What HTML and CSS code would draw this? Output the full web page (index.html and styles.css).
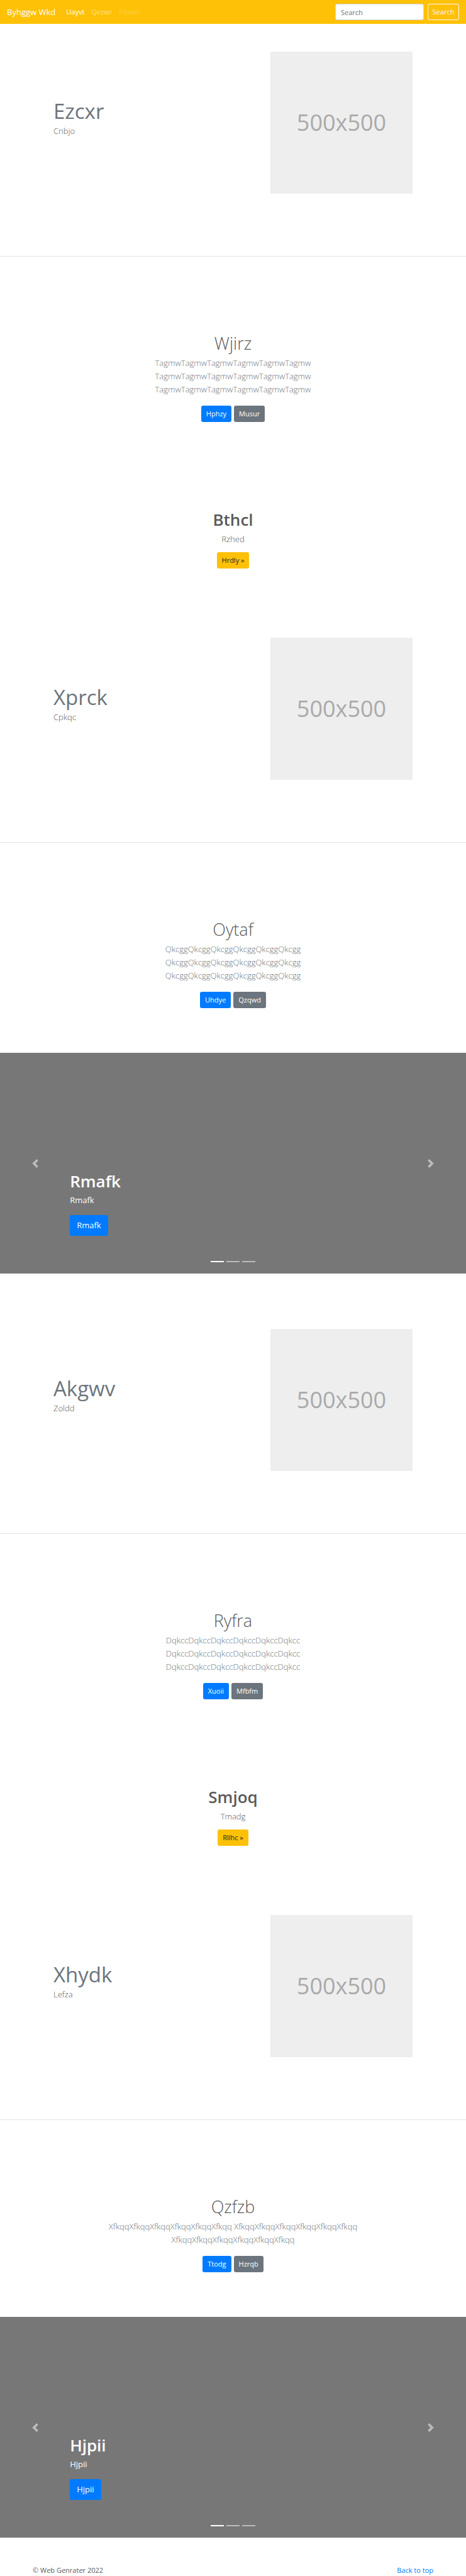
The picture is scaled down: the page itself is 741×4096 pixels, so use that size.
FILE: index.html
```html
<!DOCTYPE html>
<html lang="en">
<head>
<meta charset="utf-8">
<meta name="viewport" content="width=device-width, initial-scale=1">
<title>Byhggw Wkd</title>
<link rel="stylesheet" href="styles.css">
</head>
<body id="top">
<header class="navbar">
  <a class="brand" href="#">Byhggw Wkd</a>
  <nav class="nav-links">
    <a class="nav-link active" href="#">Uayvt</a>
    <a class="nav-link" href="#">Qezwr</a>
    <a class="nav-link disabled" href="#">Pdawc</a>
  </nav>
  <form class="search">
    <input class="search-input" type="text" placeholder="Search" aria-label="Search">
    <button class="search-button" type="button">Search</button>
  </form>
</header>
<main>
  <section class="feature">
    <div class="feature-text"><h2 class="feature-title">Ezcxr</h2><p class="lead">Cnbjo</p></div>
    <div class="placeholder">500x500</div>
  </section>
  <section class="intro">
    <h1 class="intro-title">Wjirz</h1>
    <p class="lead muted">TagmwTagmwTagmwTagmwTagmwTagmw<br>TagmwTagmwTagmwTagmwTagmwTagmw<br>TagmwTagmwTagmwTagmwTagmwTagmw</p>
    <div class="actions"><a class="btn primary" href="#">Hphzy</a><a class="btn secondary" href="#">Musur</a></div>
  </section>
  <section class="callout">
    <h2 class="callout-title">Bthcl</h2>
    <p class="lead">Rzhed</p>
    <a class="btn warning" href="#">Hrdly »</a>
  </section>
  <section class="feature">
    <div class="feature-text"><h2 class="feature-title">Xprck</h2><p class="lead">Cpkqc</p></div>
    <div class="placeholder">500x500</div>
  </section>
  <section class="intro">
    <h1 class="intro-title">Oytaf</h1>
    <p class="lead muted">QkcggQkcggQkcggQkcggQkcggQkcgg<br>QkcggQkcggQkcggQkcggQkcggQkcgg<br>QkcggQkcggQkcggQkcggQkcggQkcgg</p>
    <div class="actions"><a class="btn primary" href="#">Uhdye</a><a class="btn secondary" href="#">Qzqwd</a></div>
  </section>
  <section class="carousel">
    <h1 class="slide-title">Rmafk</h1>
    <p class="slide-text">Rmafk</p>
    <a class="btn primary large" href="#">Rmafk</a>
    <button class="arrow prev" type="button" aria-label="Previous"><svg class="chevron" viewBox="0 0 8 8"><path d="M5.25 0l-4 4 4 4 1.5-1.5L4.25 4l2.500-2.500L5.250 0z"/></svg></button>
    <button class="arrow next" type="button" aria-label="Next"><svg class="chevron" viewBox="0 0 8 8"><path d="M2.750 0l-1.500 1.500L3.750 4l-2.500 2.500L2.750 8l4-4-4-4z"/></svg></button>
    <div class="indicators"><span class="indicator current"></span><span class="indicator"></span><span class="indicator"></span></div>
  </section>
  <section class="feature">
    <div class="feature-text"><h2 class="feature-title">Akgwv</h2><p class="lead">Zoldd</p></div>
    <div class="placeholder">500x500</div>
  </section>
  <section class="intro">
    <h1 class="intro-title">Ryfra</h1>
    <p class="lead muted">DqkccDqkccDqkccDqkccDqkccDqkcc<br>DqkccDqkccDqkccDqkccDqkccDqkcc<br>DqkccDqkccDqkccDqkccDqkccDqkcc</p>
    <div class="actions"><a class="btn primary" href="#">Xuoii</a><a class="btn secondary" href="#">Mfbfm</a></div>
  </section>
  <section class="callout">
    <h2 class="callout-title">Smjoq</h2>
    <p class="lead">Tmadg</p>
    <a class="btn warning" href="#">Rllhc »</a>
  </section>
  <section class="feature">
    <div class="feature-text"><h2 class="feature-title">Xhydk</h2><p class="lead">Lefza</p></div>
    <div class="placeholder">500x500</div>
  </section>
  <section class="intro">
    <h1 class="intro-title">Qzfzb</h1>
    <p class="lead muted">XfkqqXfkqqXfkqqXfkqqXfkqqXfkqq XfkqqXfkqqXfkqqXfkqqXfkqqXfkqq<br>XfkqqXfkqqXfkqqXfkqqXfkqqXfkqq</p>
    <div class="actions"><a class="btn primary" href="#">Ttodg</a><a class="btn secondary" href="#">Hzrqb</a></div>
  </section>
  <section class="carousel">
    <h1 class="slide-title">Hjpii</h1>
    <p class="slide-text">Hjpii</p>
    <a class="btn primary large" href="#">Hjpii</a>
    <button class="arrow prev" type="button" aria-label="Previous"><svg class="chevron" viewBox="0 0 8 8"><path d="M5.25 0l-4 4 4 4 1.5-1.5L4.25 4l2.500-2.500L5.250 0z"/></svg></button>
    <button class="arrow next" type="button" aria-label="Next"><svg class="chevron" viewBox="0 0 8 8"><path d="M2.750 0l-1.500 1.500L3.750 4l-2.500 2.500L2.750 8l4-4-4-4z"/></svg></button>
    <div class="indicators"><span class="indicator current"></span><span class="indicator"></span><span class="indicator"></span></div>
  </section>
</main>
<footer class="footer">
  <span>© Web Genrater 2022</span>
  <a class="top-link" href="#top">Back to top</a>
</footer>
</body>
</html>
```

FILE: styles.css
```css
* {
  box-sizing: border-box;
}

body {
  margin: 0;
  background: #fff;
  color: #5a5a5a;
  font-family: "Open Sans", "Noto Sans", sans-serif;
  font-size: 11px;
  line-height: 16px;
}

h1,
h2,
p {
  margin: 0;
}

a {
  text-decoration: none;
}

.navbar {
  display: flex;
  align-items: center;
  height: 38px;
  padding: 0 11px;
  background: #ffc107;
}

.brand {
  margin-right: 17px;
  color: #fff;
  font-size: 13px;
  line-height: 20px;
}

.nav-links {
  display: flex;
  gap: 11px;
}

.nav-link {
  color: rgba(255, 255, 255, 0.5);
}

.nav-link.active {
  color: #fff;
}

.nav-link.disabled {
  color: rgba(255, 255, 255, 0.25);
}

.search {
  display: flex;
  gap: 6px;
  margin-left: auto;
}

.search-input,
.search-button {
  height: 26px;
  padding: 0 8px;
  border-radius: 3px;
  font: inherit;
}

.search-input {
  width: 141px;
  border: 1px solid #ced4da;
  background: #fff;
}

.search-input::placeholder {
  color: #6c757d;
  opacity: 1;
}

.search-button {
  width: 50px;
  padding: 0;
  border: 1px solid #f8f9fa;
  background: transparent;
  color: #f8f9fa;
}

.feature {
  display: flex;
  justify-content: space-between;
  padding: 44px 85px 99px;
  border-bottom: 1px solid #e5e5e5;
}

.feature-text {
  padding-top: 74px;
}

.feature-title {
  color: #6c757d;
  font-size: 33px;
  font-weight: 400;
  line-height: 42px;
}

.lead {
  font-size: 13px;
  font-weight: 300;
  line-height: 21px;
}

.muted {
  color: #6c757d;
}

.placeholder {
  display: flex;
  align-items: center;
  justify-content: center;
  width: 226px;
  aspect-ratio: 1;
  background: #eee;
  color: #aaa;
  font-size: 36px;
}

.intro,
.callout {
  display: flex;
  flex-direction: column;
  align-items: center;
  gap: 5px;
  text-align: center;
}

.intro {
  padding: 122px 11px 71px;
}

.callout {
  padding: 68px 11px 66px;
}

.intro-title,
.callout-title,
.slide-title {
  line-height: 32px;
}

.intro-title {
  font-size: 27px;
  font-weight: 300;
}

.callout-title,
.slide-title {
  font-size: 26px;
  font-weight: 600;
}

.actions {
  display: flex;
  gap: 4px;
  margin-top: 10px;
}

.btn {
  padding: 5px 8px;
  border-radius: 3px;
  color: #fff;
  line-height: 16px;
}

.callout .btn {
  margin-top: 5px;
}

.primary {
  background: #007bff;
}

.secondary {
  background: #6c757d;
}

.warning {
  background: #ffc107;
  color: #212529;
}

.large {
  padding: 6px 11px;
  font-size: 13px;
  line-height: 21px;
}

.carousel {
  position: relative;
  display: flex;
  flex-direction: column;
  align-items: flex-start;
  justify-content: flex-end;
  min-height: 351px;
  margin-bottom: 44px;
  padding: 0 15% 60px;
  background: #777;
  color: #fff;
}

.slide-text {
  margin: 4px 0 13px;
  font-size: 13px;
  line-height: 21px;
}

.arrow {
  position: absolute;
  top: 0;
  bottom: 0;
  display: flex;
  align-items: center;
  justify-content: center;
  width: 15%;
  padding: 0;
  border: 0;
  background: none;
  opacity: 0.5;
}

.prev {
  left: 0;
}

.next {
  right: 0;
}

.chevron {
  width: 14px;
  height: 14px;
  fill: #fff;
}

.indicators {
  position: absolute;
  right: 0;
  bottom: 18px;
  left: 0;
  display: flex;
  justify-content: center;
  gap: 4px;
}

.indicator {
  width: 21px;
  height: 2px;
  background: #fff;
  opacity: 0.5;
}

.indicator.current {
  opacity: 1;
}

.footer {
  display: flex;
  justify-content: space-between;
  padding: 0 52px;
}

.top-link {
  color: #007bff;
}
```
